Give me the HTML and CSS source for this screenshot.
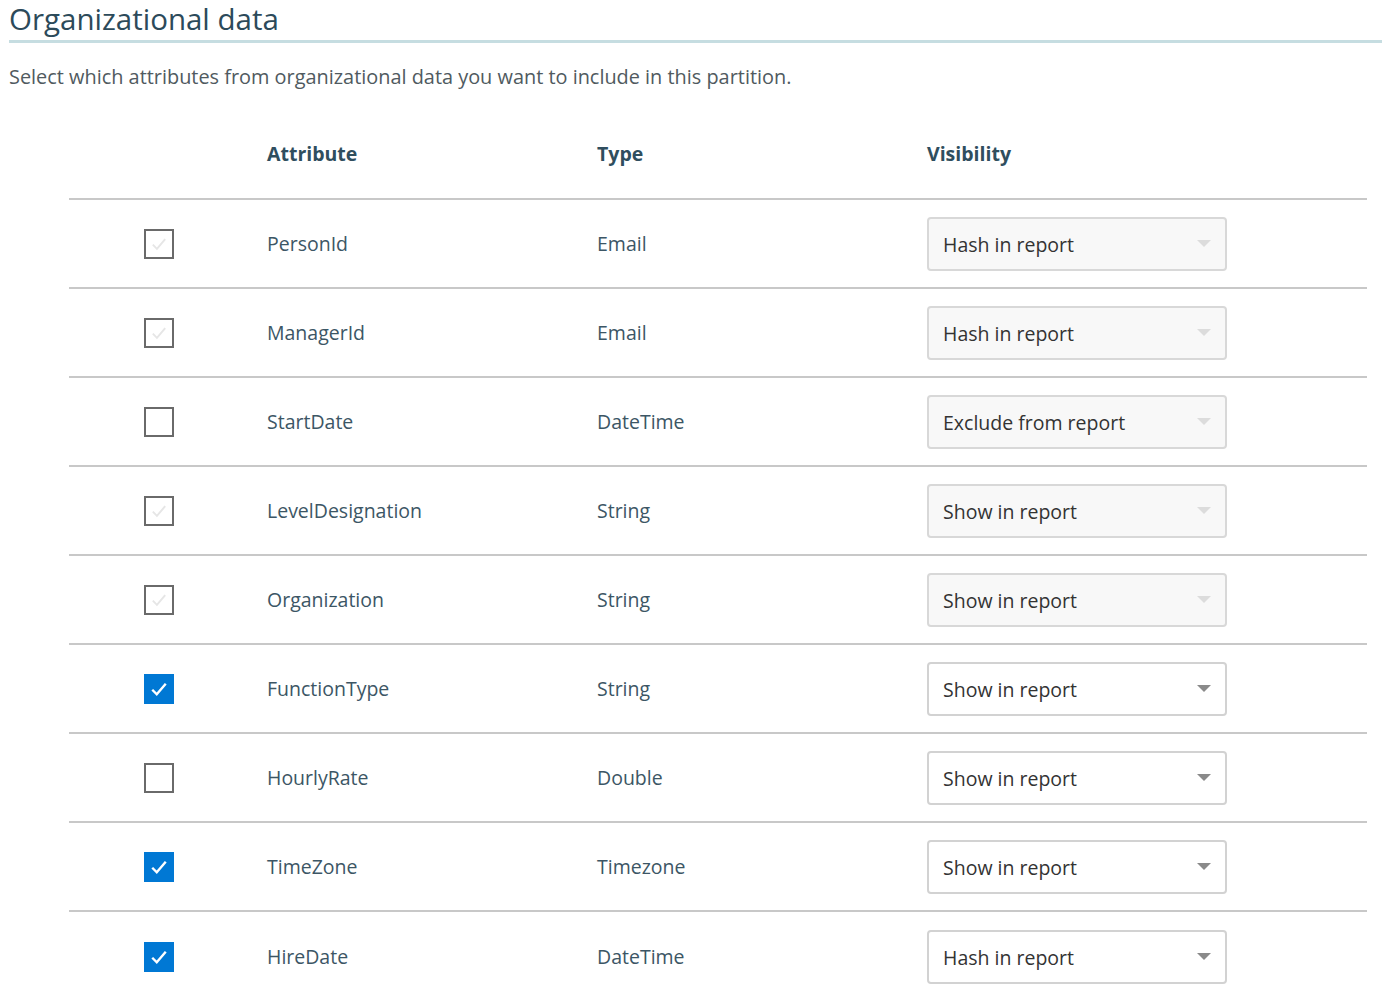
FILE: index.html
```html
<!DOCTYPE html>
<html lang="en">
<head>
<meta charset="utf-8">
<title>Organizational data</title>
<link rel="stylesheet" href="styles.css">
</head>
<body>
<div class="page">
  <h1 class="title">Organizational data</h1>
  <p class="desc">Select which attributes from organizational data you want to include in this partition.</p>
  <div class="table">
    <div class="row head">
      <div class="cell"></div>
      <div class="cell">Attribute</div>
      <div class="cell">Type</div>
      <div class="cell">Visibility</div>
    </div>

    <div class="row">
      <div class="cell"><span class="cb disabled"><svg viewBox="0 0 16 16"><path d="M3.5 8.5l3 3 6-7" /></svg></span></div>
      <div class="cell">PersonId</div>
      <div class="cell">Email</div>
      <div class="cell"><div class="select disabled"><span>Hash in report</span><i class="caret"></i></div></div>
    </div>
    <div class="row">
      <div class="cell"><span class="cb disabled"><svg viewBox="0 0 16 16"><path d="M3.5 8.5l3 3 6-7" /></svg></span></div>
      <div class="cell">ManagerId</div>
      <div class="cell">Email</div>
      <div class="cell"><div class="select disabled"><span>Hash in report</span><i class="caret"></i></div></div>
    </div>
    <div class="row">
      <div class="cell"><span class="cb"></span></div>
      <div class="cell">StartDate</div>
      <div class="cell">DateTime</div>
      <div class="cell"><div class="select disabled"><span>Exclude from report</span><i class="caret"></i></div></div>
    </div>
    <div class="row">
      <div class="cell"><span class="cb disabled"><svg viewBox="0 0 16 16"><path d="M3.5 8.5l3 3 6-7" /></svg></span></div>
      <div class="cell">LevelDesignation</div>
      <div class="cell">String</div>
      <div class="cell"><div class="select disabled"><span>Show in report</span><i class="caret"></i></div></div>
    </div>
    <div class="row">
      <div class="cell"><span class="cb disabled"><svg viewBox="0 0 16 16"><path d="M3.5 8.5l3 3 6-7" /></svg></span></div>
      <div class="cell">Organization</div>
      <div class="cell">String</div>
      <div class="cell"><div class="select disabled"><span>Show in report</span><i class="caret"></i></div></div>
    </div>
    <div class="row">
      <div class="cell"><span class="cb checked"><svg viewBox="0 0 16 16"><path d="M3.5 8.5l3 3 6-7" /></svg></span></div>
      <div class="cell">FunctionType</div>
      <div class="cell">String</div>
      <div class="cell"><div class="select"><span>Show in report</span><i class="caret"></i></div></div>
    </div>
    <div class="row">
      <div class="cell"><span class="cb"></span></div>
      <div class="cell">HourlyRate</div>
      <div class="cell">Double</div>
      <div class="cell"><div class="select"><span>Show in report</span><i class="caret"></i></div></div>
    </div>
    <div class="row">
      <div class="cell"><span class="cb checked"><svg viewBox="0 0 16 16"><path d="M3.5 8.5l3 3 6-7" /></svg></span></div>
      <div class="cell">TimeZone</div>
      <div class="cell">Timezone</div>
      <div class="cell"><div class="select"><span>Show in report</span><i class="caret"></i></div></div>
    </div>
    <div class="row last">
      <div class="cell"><span class="cb checked"><svg viewBox="0 0 16 16"><path d="M3.5 8.5l3 3 6-7" /></svg></span></div>
      <div class="cell">HireDate</div>
      <div class="cell">DateTime</div>
      <div class="cell"><div class="select"><span>Hash in report</span><i class="caret"></i></div></div>
    </div>
  </div>
</div>
</body>
</html>
```

FILE: styles.css
```css
* { box-sizing: border-box; }
html, body { margin: 0; padding: 0; background: #fff; }
body {
  font-family: "Open Sans", "Noto Sans", "Liberation Sans", sans-serif;
  color: #3c5665;
}
.page {
  padding: 0 12px 0 9px;
}
.title {
  margin: 0;
  font-size: 29.5px;
  font-weight: 400;
  line-height: 37px;
  color: #2c4a5a;
  padding-top: 0;
  padding-bottom: 3px;
  border-bottom: 3px solid #c6dde1;
  width: 1373px;
}
.desc {
  margin: 20px 0 0 0;
  font-size: 19.9px;
  line-height: 28px;
  color: #505a60;
}
.table {
  margin: 40px 0 0 60px;
  width: 1298px;
}
.row {
  display: grid;
  grid-template-columns: 198px 330px 330px 1fr;
  align-items: center;
  height: 89px;
  border-bottom: 2px solid #c8c8c8;
  font-size: 19.5px;
}
.row.head {
  height: 69px;
  font-weight: 700;
  color: #2f4e5e;
  align-items: start;
  padding-top: 9px;
}
.row.last { border-bottom: none; }
.cell { display: flex; align-items: center; }
.cb {
  margin-left: 75px;
  width: 30px;
  height: 30px;
  border: 2px solid #6a6a6a;
  display: flex;
  align-items: center;
  justify-content: center;
  background: #fff;
}
.cb svg { width: 22px; height: 22px; fill: none; stroke-width: 1.4; }
.cb.disabled svg { stroke: #e6e6e6; }
.cb.checked { background: #0078d4; border-color: #0078d4; }
.cb.checked svg { stroke: #fff; stroke-width: 1.6; width: 24px; height: 24px; }
.select {
  width: 300px;
  height: 54px;
  margin-top: 1px;
  border: 2px solid #d2d2d2;
  border-radius: 4px;
  background: #fff;
  display: flex;
  align-items: center;
  justify-content: space-between;
  padding: 0 14px 0 14px;
  color: #333;
  font-size: 19.5px;
}
.select.disabled { background: #f8f8f8; border-color: #d8d8d8; }
.caret {
  width: 0; height: 0;
  border-left: 7px solid transparent;
  border-right: 7px solid transparent;
  border-top: 7px solid #8a8a8a;
  margin-top: -2px;
}
.select.disabled .caret { border-top-color: #dcdcdc; }
```
